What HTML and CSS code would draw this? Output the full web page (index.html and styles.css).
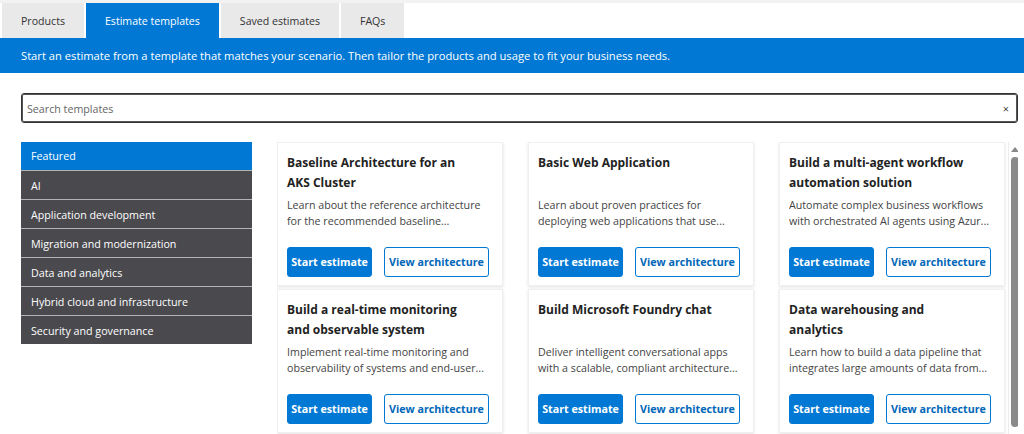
FILE: index.html
```html
<!DOCTYPE html>
<html lang="en">
<head>
  <title>Pricing calculator - Estimate templates</title>
  <link rel="stylesheet" href="styles.css">
</head>
<body>

<div class="topline"></div>
<ul class="tabs">
  <li class="tab">Products</li>
  <li class="tab active">Estimate templates</li>
  <li class="tab">Saved estimates</li>
  <li class="tab">FAQs</li>
</ul>
<div class="banner">Start an estimate from a template that matches your scenario. Then tailor the products and usage to fit your business needs.</div>

<div id="wrapper">
  <div class="search">
    <input type="text" placeholder="Search templates">
    <span class="clear">&#215;</span>
  </div>

  <div class="content">
    <ul class="nav">
      <li class="active">Featured</li>
      <li>AI</li>
      <li>Application development</li>
      <li>Migration and modernization</li>
      <li>Data and analytics</li>
      <li>Hybrid cloud and infrastructure</li>
      <li>Security and governance</li>
    </ul>

    <div class="results">
      <div class="cards">
        <div class="card">
          <h3>Baseline Architecture for an AKS Cluster</h3>
          <p>Learn about the reference architecture for the recommended baseline...</p>
          <div class="buttons"><button class="primary">Start estimate</button><button class="secondary">View architecture</button></div>
        </div>
        <div class="card">
          <h3>Basic Web Application</h3>
          <p>Learn about proven practices for deploying web applications that use...</p>
          <div class="buttons"><button class="primary">Start estimate</button><button class="secondary">View architecture</button></div>
        </div>
        <div class="card">
          <h3>Build a multi-agent workflow automation solution</h3>
          <p>Automate complex business workflows with orchestrated AI agents using Azur...</p>
          <div class="buttons"><button class="primary">Start estimate</button><button class="secondary">View architecture</button></div>
        </div>
        <div class="card">
          <h3>Build a real-time monitoring and observable system</h3>
          <p>Implement real-time monitoring and observability of systems and end-user...</p>
          <div class="buttons"><button class="primary">Start estimate</button><button class="secondary">View architecture</button></div>
        </div>
        <div class="card">
          <h3>Build Microsoft Foundry chat</h3>
          <p>Deliver intelligent conversational apps with a scalable, compliant architecture...</p>
          <div class="buttons"><button class="primary">Start estimate</button><button class="secondary">View architecture</button></div>
        </div>
        <div class="card">
          <h3>Data warehousing and analytics</h3>
          <p>Learn how to build a data pipeline that integrates large amounts of data from...</p>
          <div class="buttons"><button class="primary">Start estimate</button><button class="secondary">View architecture</button></div>
        </div>
      </div>
      <div class="scrollbar">
        <div class="arrow"></div>
        <div class="thumb"></div>
      </div>
    </div>
  </div>
</div>

</body>
</html>
```

FILE: styles.css
```css
* {
  box-sizing: border-box;
}

body {
  margin: 0;
  padding: 0;
  font-family: "Open Sans", "Noto Sans", sans-serif;
  font-size: 10.7px;
  color: #222;
  background-color: #fff;
  overflow: hidden;
}

.topline {
  height: 3px;
  background-color: #f2f2f2;
}

.tabs {
  display: flex;
  gap: 2px;
  margin: 0;
  padding: 0 0 0 2px;
  list-style: none;
}
.tab {
  height: 35px;
  line-height: 37px;
  padding: 0 19px;
  font-size: 10.6px;
  background-color: #e9e9ea;
  color: #333;
}
.tab.active {
  background-color: #0078d4;
  color: #fff;
}

.banner {
  height: 35px;
  line-height: 36px;
  padding-left: 21px;
  font-size: 11.2px;
  background-color: #0078d4;
  color: #fff;
}

#wrapper {
  padding: 20px 6px 0 21px;
}

.search {
  display: flex;
  align-items: center;
  height: 30px;
  padding: 1px 8px 0 5px;
  border: 1px solid #333;
  border-radius: 3px;
  box-shadow: inset 0 0 0 1px #555;
}
.search input {
  flex: 1;
  border: 0;
  outline: 0;
  padding: 0;
  font: inherit;
  color: #333;
  background: transparent;
}
.search input::placeholder {
  color: #666;
}
.clear {
  font-size: 11px;
  color: #444;
}

.content {
  display: flex;
  gap: 25px;
  margin-top: 19px;
}

.nav {
  width: 231px;
  flex: none;
  margin: 0;
  padding: 0;
  list-style: none;
  align-self: flex-start;
}
.nav li {
  height: 29px;
  line-height: 30px;
  padding-left: 10px;
  background-color: #4a494e;
  color: #fff;
  border-top: 1px solid #b4b4b4;
}
.nav li.active {
  height: 28px;
  line-height: 29px;
  background-color: #0078d4;
  border-top: 0;
}

.results {
  flex: 1;
  display: flex;
  gap: 3px;
  height: 292px;
  overflow: hidden;
}

.cards {
  flex: 1;
  display: grid;
  grid-template-columns: repeat(3, 226px);
  column-gap: 25px;
  row-gap: 3px;
  align-content: start;
}

.card {
  height: 144px;
  padding: 10px 9px 8px;
  background-color: #fff;
  border: 1px solid #f0f0f0;
  box-shadow: 0 1px 3px rgba(0,0,0,.12);
  display: flex;
  flex-direction: column;
}
.card h3 {
  margin: 0;
  padding-right: 22px;
  min-height: 40px;
  font-size: 12px;
  line-height: 20px;
  font-weight: 700;
  color: #222;
}
.card p {
  margin: 5px 0 0;
  line-height: 15.5px;
  color: #444;
  max-height: 31px;
  overflow: hidden;
}

.buttons {
  display: flex;
  gap: 12px;
  margin-top: auto;
}
.buttons button {
  height: 30px;
  padding: 0;
  border-radius: 3px;
  font: inherit;
  font-weight: 700;
  white-space: nowrap;
}
.primary {
  width: 85px;
  border: 1px solid #0078d4;
  background-color: #0078d4;
  color: #fff;
}
.secondary {
  width: 105px;
  border: 1px solid #0078d4;
  background-color: #fff;
  color: #0067b8;
}

.scrollbar {
  width: 12px;
  flex: none;
  border-left: 1px solid #ececec;
  padding: 5px 0 0 1px;
}
.arrow {
  width: 0;
  height: 0;
  margin: 0 auto 5px;
  border-left: 4px solid transparent;
  border-right: 4px solid transparent;
  border-bottom: 5px solid #888;
}
.thumb {
  width: 8px;
  height: 270px;
  margin: 0 auto;
  border-radius: 4px;
  background-color: #8a8a8a;
}
```
